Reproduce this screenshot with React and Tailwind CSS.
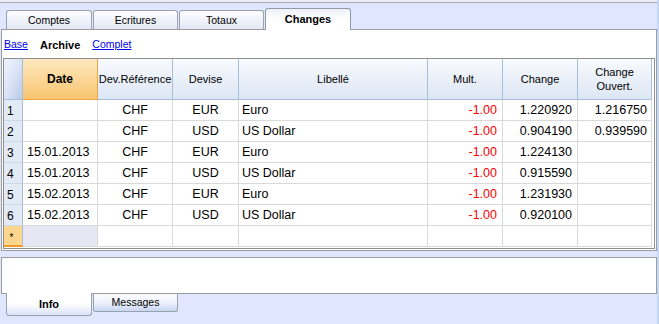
import React from "react";

const rows = [
  { n: "1", date: "", ref: "CHF", dev: "EUR", lib: "Euro", mult: "-1.00", ch: "1.220920", co: "1.216750" },
  { n: "2", date: "", ref: "CHF", dev: "USD", lib: "US Dollar", mult: "-1.00", ch: "0.904190", co: "0.939590" },
  { n: "3", date: "15.01.2013", ref: "CHF", dev: "EUR", lib: "Euro", mult: "-1.00", ch: "1.224130", co: "" },
  { n: "4", date: "15.01.2013", ref: "CHF", dev: "USD", lib: "US Dollar", mult: "-1.00", ch: "0.915590", co: "" },
  { n: "5", date: "15.02.2013", ref: "CHF", dev: "EUR", lib: "Euro", mult: "-1.00", ch: "1.231930", co: "" },
  { n: "6", date: "15.02.2013", ref: "CHF", dev: "USD", lib: "US Dollar", mult: "-1.00", ch: "0.920100", co: "" },
];

const gridCols = "grid grid-cols-[19px_75px_75px_66px_189px_75px_75px_74px]";

function TopTab({ label, active, width }) {
  if (active) {
    return (
      <div
        className={`${width} relative z-10 -mb-px h-[22px] rounded-t-[3px] border border-b-0 border-[#8f9aa6] bg-gradient-to-b from-[#eef1f8] via-white to-white flex items-center justify-center text-[11px] font-bold text-black`}
      >
        {label}
      </div>
    );
  }
  return (
    <div
      className={`${width} h-[19px] rounded-t-[3px] border border-b-0 border-[#9aa3ad] bg-gradient-to-b from-[#fdfdff] to-[#e3e8f5] flex items-center justify-center text-[10.5px] text-black pt-[1px]`}
    >
      {label}
    </div>
  );
}

function HeaderCell({ children, className = "" }) {
  return (
    <div
      className={`h-[41px] border-r border-b border-[#a8bfdb] bg-gradient-to-b from-[#f8fafe] to-[#dde6f4] flex items-center justify-center text-center text-[11px] leading-[14px] text-black ${className}`}
    >
      {children}
    </div>
  );
}

function Cell({ children, className = "" }) {
  return (
    <div className={`h-[21px] border-r border-b border-[#d9d9d9] flex items-center text-[12.5px] text-black pt-[1px] whitespace-nowrap ${className}`}>
      {children}
    </div>
  );
}

export default function App() {
  return (
    <div className="w-[659px] h-[324px] overflow-hidden bg-[#dfe6fd] flex font-['Liberation_Sans',Arial,sans-serif]">
      <div className="w-[657px] flex flex-col">
        {/* top strip */}
        <div className="h-[3px] bg-[#eceef6] border-b border-[#a6a8b4]" />

        {/* tabs */}
        <div className="h-[26px] flex items-end gap-[1px] pl-[6px]">
          <TopTab label="Comptes" width="w-[86px]" />
          <TopTab label="Ecritures" width="w-[85px]" />
          <TopTab label="Totaux" width="w-[85px]" />
          <TopTab label="Changes" width="w-[86px]" active />
        </div>

        {/* main panel */}
        <div className="ml-[1px] w-[656px] h-[222px] border border-[#9c9c9c] bg-white flex flex-col">
          <div className="h-[28px] flex items-center gap-[12px] pl-[2px] pt-[2px] text-[10.5px]">
            <span className="text-[#0000ee] underline">Base</span>
            <span className="font-bold text-[11px] text-black">Archive</span>
            <span className="text-[#0000ee] underline">Complet</span>
          </div>

          <div className="ml-[1px] w-[652px] h-[191px] border border-[#8e8e8e]">
            <div className={gridCols}>
              <div className="h-[41px] border-r border-b border-[#a8bfdb] bg-gradient-to-br from-[#eef3fd] via-[#dbe4f7] to-[#b9cae8]" />
              <HeaderCell className="font-bold text-[12px] !border-[#f0a443] !from-[#fde9bd] !to-[#f8c46f]">Date</HeaderCell>
              <HeaderCell>Dev.Référence</HeaderCell>
              <HeaderCell>Devise</HeaderCell>
              <HeaderCell>Libellé</HeaderCell>
              <HeaderCell>Mult.</HeaderCell>
              <HeaderCell>Change</HeaderCell>
              <HeaderCell>
                Change
                <br />
                Ouvert.
              </HeaderCell>

              {rows.map((r) => (
                <React.Fragment key={r.n}>
                  <div className="h-[21px] border-r border-b border-r-[#a8bfdb] border-b-[#cbd8ea] bg-[#e2eaf6] flex items-center pl-[3px] pt-[1px] text-[12px] text-black">
                    {r.n}
                  </div>
                  <Cell className="pl-[4px]">{r.date}</Cell>
                  <Cell className="justify-center">{r.ref}</Cell>
                  <Cell className="justify-center">{r.dev}</Cell>
                  <Cell className="pl-[3px]">{r.lib}</Cell>
                  <Cell className="justify-end pr-[5px] !text-[#ff0000]">{r.mult}</Cell>
                  <Cell className="justify-end pr-[5px]">{r.ch}</Cell>
                  <Cell className="justify-end pr-[4px]">{r.co}</Cell>
                </React.Fragment>
              ))}

              <div className="h-[21px] border-r border-b-2 border-r-[#a8bfdb] border-b-[#f19a2c] bg-[#fdd68e] flex items-start justify-center pt-[4px] pr-[3px] text-[10px] text-black">
                *
              </div>
              <Cell className="bg-[#e6e6f5]" />
              <Cell />
              <Cell />
              <Cell />
              <Cell />
              <Cell />
              <Cell />
            </div>
          </div>
        </div>

        {/* bottom panel */}
        <div className="mt-[6px] ml-[1px] w-[656px] h-[37px] border border-[#9c9c9c] bg-white" />

        {/* bottom tabs */}
        <div className="flex items-start gap-[1px] pl-[6px]">
          <div className="relative z-10 -mt-px w-[86px] h-[23px] rounded-b-[3px] border border-t-0 border-[#9aa3ad] bg-gradient-to-b from-white via-white to-[#d9e2f8] flex items-center justify-center pt-[1px] text-[11px] font-bold text-black">
            Info
          </div>
          <div className="w-[85px] h-[18px] rounded-b-[3px] border border-t-0 border-[#9aa3ad] bg-gradient-to-b from-[#fbfcff] via-[#eef2fc] to-[#c9d6f3] flex items-center justify-center text-[10.5px] text-black">
            Messages
          </div>
        </div>
      </div>
      <div className="w-[2px] bg-[#c5d6f5]" />
    </div>
  );
}
